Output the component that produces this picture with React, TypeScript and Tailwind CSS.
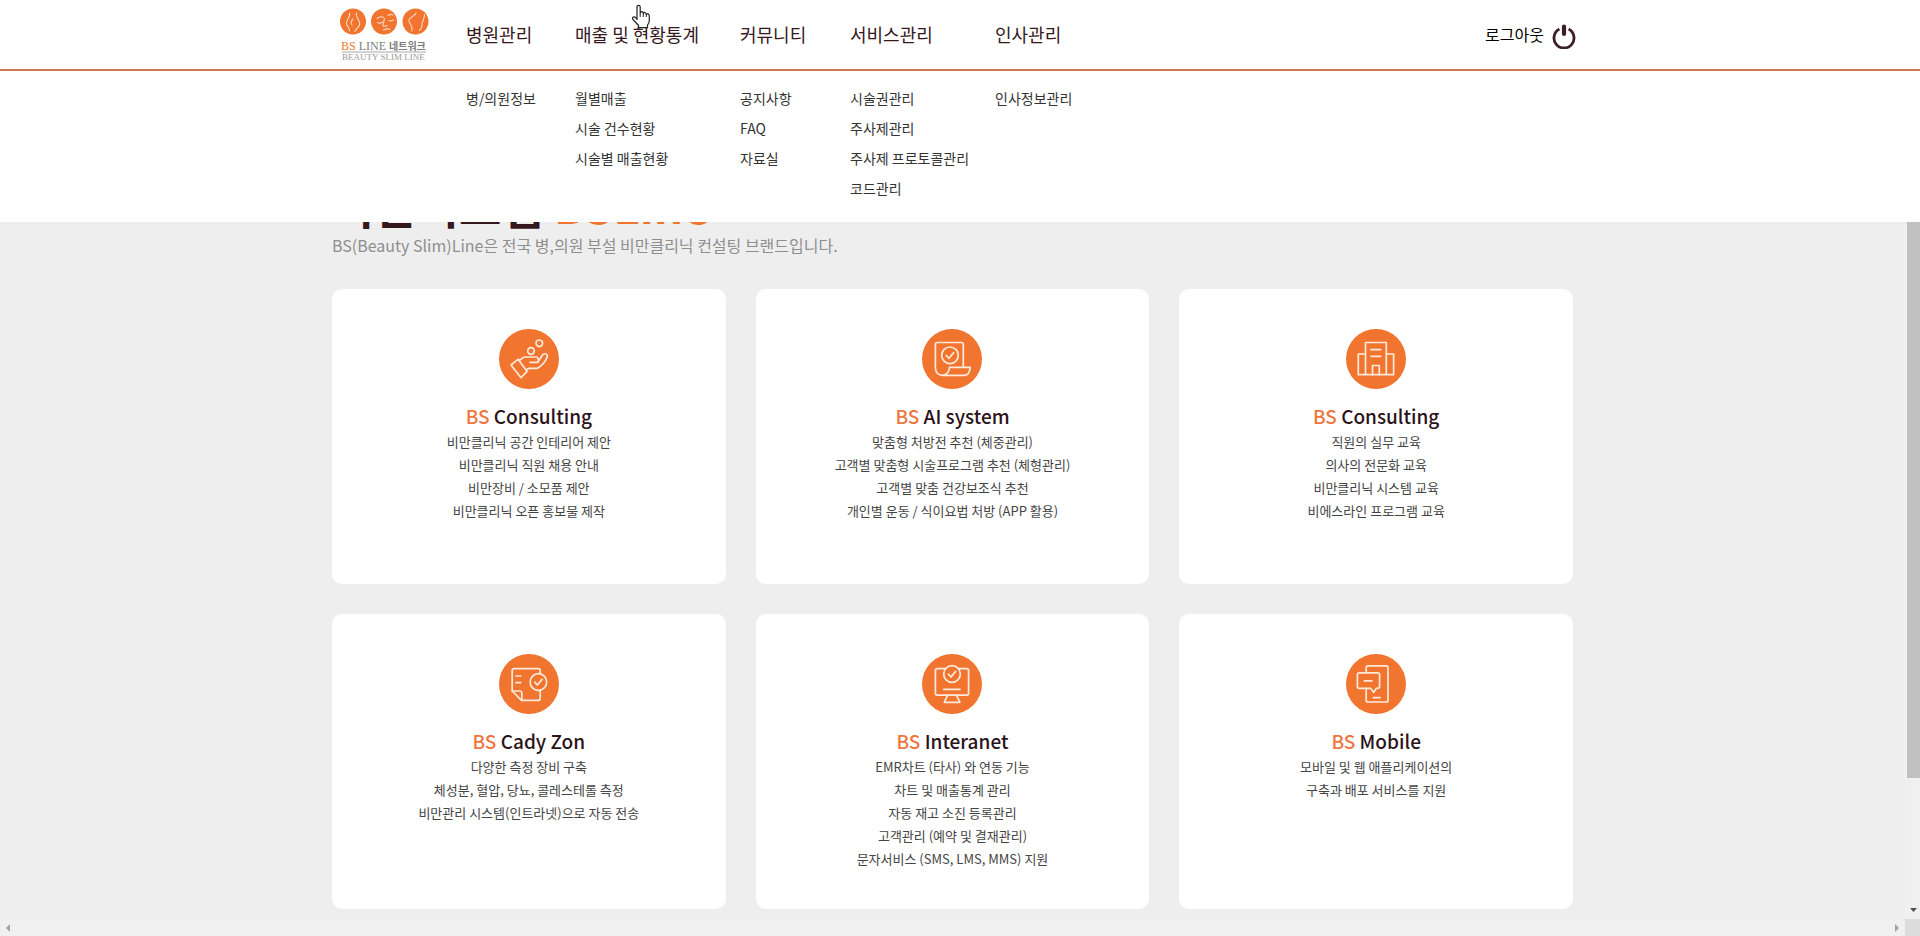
import type { ReactNode } from "react";

const menus = [
  { title: "병원관리", items: ["병/의원정보"] },
  { title: "매출 및 현황통계", items: ["월별매출", "시술 건수현황", "시술별 매출현황"] },
  { title: "커뮤니티", items: ["공지사항", "FAQ", "자료실"] },
  { title: "서비스관리", items: ["시술권관리", "주사제관리", "주사제 프로토콜관리", "코드관리"] },
  { title: "인사관리", items: ["인사정보관리"] },
];

const handIcon = (
  <>
    <circle cx="40.3" cy="14.3" r="3.3" />
    <circle cx="32" cy="22" r="3.3" />
    <path d="M12 36 19 30.3 28 42.3 22 48.7Z" />
    <path d="M19.5 31 C22 32 22.5 28 26 28 H37 C39.5 28 39.8 31 38.8 33.3 H31 M38.8 33.3 L43.3 26.2 C45.5 23.5 49 25 48.2 28 C46.5 32.5 42.5 37 38.5 39.3 H30 L27.2 41" />
  </>
);

const scrollIcon = (
  <>
    <path d="M41.3 38 V15.3 Q41.3 13.5 39.5 13.5 H15.2 Q13.4 13.5 13.4 15.3 V39 Q14 46.3 20.5 46.3 H42.5 Q47.5 46 48.3 38.3 H27.5 Q27 45.5 20.5 46.3" />
    <circle cx="28" cy="26.3" r="8.3" />
    <path d="M24.3 26.5 27 29.3 31.6 23.7" />
  </>
);

const buildingIcon = (
  <>
    <path d="M19.5 45.7 V13.5 H40.3 V45.7 M19.5 25 H12.3 V45.7 H47.6 V25 H40.3" />
    <path d="M25 20.7 H34.7 M25 27.3 H34.7 M26.5 45.7 V36.5 H33.3 V45.7" />
  </>
);

const reportIcon = (
  <>
    <path d="M41.2 19.7 V16.7 Q41.2 14.7 39.2 14.7 H15.2 Q13.2 14.7 13.2 16.7 V37 L22.5 46.3 H39.2 Q41.2 46.3 41.2 44.3 V36.3" />
    <path d="M13.2 37 H20.5 Q22.8 37 22.8 39.3 V46.3 M17 22 H21.7 M17 28.7 H21.7" />
    <circle cx="39.4" cy="28" r="8.3" />
    <path d="M35.7 28.2 38.4 31 43 25.4" />
  </>
);

const monitorIcon = (
  <>
    <path d="M23.3 14.7 H15.3 Q13.4 14.7 13.4 16.6 V39.2 Q13.4 41.1 15.3 41.1 H44.7 Q46.6 41.1 46.6 39.2 V16.6 Q46.6 14.7 44.7 14.7 H36.7" />
    <circle cx="30" cy="20" r="8.3" />
    <path d="M26.3 20.2 29 23 33.6 17.4 M21.7 35.3 H38 M25.7 41.1 22.3 48.3 H37.9 L34.4 41.1" />
  </>
);

const mobileIcon = (
  <>
    <path d="M20.2 18.7 V13.6 Q20.2 11.8 22 11.8 H40.2 Q42 11.8 42 13.6 V46.2 Q42 48 40.2 48 H22 Q20.2 48 20.2 46.2 V34.4" />
    <path d="M13.2 18.8 H31.7 Q33.6 18.8 33.6 20.7 V32.5 Q33.6 34.4 31.7 34.4 H30.2 L27.8 38.4 24.8 34.4 H13.2 Q11.4 34.4 11.4 32.5 V20.7 Q11.4 18.8 13.2 18.8Z" />
    <path d="M18.3 26.8 H26 M27.3 43.7 H34" />
  </>
);

const services: { name: string; icon: ReactNode; lines: string[] }[] = [
  {
    name: "Consulting",
    icon: handIcon,
    lines: ["비만클리닉 공간 인테리어 제안", "비만클리닉 직원 채용 안내", "비만장비 / 소모품 제안", "비만클리닉 오픈 홍보물 제작"],
  },
  {
    name: "AI system",
    icon: scrollIcon,
    lines: ["맞춤형 처방전 추천 (체중관리)", "고객별 맞춤형 시술프로그램 추천 (체형관리)", "고객별 맞춤 건강보조식 추천", "개인별 운동 / 식이요법 처방 (APP 활용)"],
  },
  {
    name: "Consulting",
    icon: buildingIcon,
    lines: ["직원의 실무 교육", "의사의 전문화 교육", "비만클리닉 시스템 교육", "비에스라인 프로그램 교육"],
  },
  {
    name: "Cady Zon",
    icon: reportIcon,
    lines: ["다양한 측정 장비 구축", "체성분, 혈압, 당뇨, 콜레스테롤 측정", "비만관리 시스템(인트라넷)으로 자동 전송"],
  },
  {
    name: "Interanet",
    icon: monitorIcon,
    lines: ["EMR차트 (타사) 와 연동 기능", "차트 및 매출통계 관리", "자동 재고 소진 등록관리", "고객관리 (예약 및 결재관리)", "문자서비스 (SMS, LMS, MMS) 지원"],
  },
  {
    name: "Mobile",
    icon: mobileIcon,
    lines: ["모바일 및 웹 애플리케이션의", "구축과 배포 서비스를 지원"],
  },
];

function Logo() {
  return (
    <svg viewBox="0 0 90 52" className="h-[52px] w-[90px]" role="img" aria-label="BS LINE 네트워크">
      <g fill="#f1742f">
        <circle cx="13" cy="13.5" r="13" />
        <circle cx="44" cy="13.5" r="13" />
        <circle cx="75.5" cy="13.5" r="13" />
      </g>
      <g fill="none" stroke="#fbd9c0" strokeWidth="1.1" strokeLinecap="round">
        <path d="M9.5 5 C11 9 6 11.5 6.500 15.500 C7 19 10 20 9.500 23 M13 11 C11 13 10.500 15 12 17" />
        <path d="M16.5 5 C15 9 21 13 19.500 17 C18.500 20 15.500 21 15 23.500" />
        <path d="M37 10.500 Q40.500 7.500 43.500 9.500 M48 7.500 Q51 5.500 53 7 M37.500 14.500 Q40 16 42.500 14" />
        <path d="M44.500 10.500 L43 17.500 Q44.500 19 47 17.500 M49 12.500 Q51 13.500 53.500 12 M43.500 22 Q47 20 50 21.500" />
        <path d="M76 5 C75 9 68 9 69 13.500 C70 16 73 18 72 23" />
        <path d="M84.500 6.500 C85 10 81.500 13 82 17 Q82 20 79.500 22.500" />
      </g>
      <text x="1" y="42" fontSize="12" className="font-['Liberation_Serif','Noto_Sans_CJK_KR',serif]" fill="#7d7d7d">
        <tspan fill="#f1742f">BS</tspan> LINE <tspan fontSize="10" fontWeight="700">네트워크</tspan>
      </text>
      <path d="M2 44 H86" stroke="#a8a8a8" strokeWidth="1" />
      <text x="2" y="51.500" fontSize="9" className="font-['Liberation_Serif',serif]" fill="#9a9a9a">
        BEAUTY SLIM LINE
      </text>
    </svg>
  );
}

const columns = "grid grid-cols-[109px_165px_110px_145px_1fr]";

function Header() {
  return (
    <header className="relative z-10 border-b-2 border-[#cc7a50] bg-white">
      <div className="mx-auto flex h-[69px] w-[1240px] items-start">
        <a href="#home" className="w-[126px] shrink-0 pt-2">
          <Logo />
        </a>
        <nav aria-label="주 메뉴" className={`${columns} flex-1 pt-[18px] text-lg leading-8 text-[#35171e]`}>
          {menus.map((menu) => (
            <a key={menu.title} href="#menu" className="whitespace-nowrap">
              {menu.title}
            </a>
          ))}
        </nav>
        <button type="button" className="flex items-center gap-2 pt-[18px] pr-1 text-base leading-8 text-black">
          로그아웃
          <svg viewBox="0 0 24 26" className="mt-1 h-[26px] w-6" fill="none" stroke="#3c2028" aria-hidden="true">
            <path d="M7.400 6.100 A10 10 0 1 0 16.600 6.100" strokeWidth="2.800" />
            <path d="M12 3.500 V11" strokeWidth="4.200" strokeLinecap="round" />
          </svg>
        </button>
      </div>
      <div className="absolute inset-x-0 top-full mt-[2px] bg-white pt-3 pb-[19px]">
        <div className={`${columns} mx-auto w-[1240px] pl-[126px] text-sm leading-[30px] text-[#333333]`}>
          {menus.map((menu) => (
            <ul key={menu.title}>
              {menu.items.map((item) => (
                <li key={item}>
                  <a href="#submenu" className="whitespace-nowrap">
                    {item}
                  </a>
                </li>
              ))}
            </ul>
          ))}
        </div>
      </div>
    </header>
  );
}

function ServiceCard({ name, icon, lines }: { name: string; icon: ReactNode; lines: string[] }) {
  return (
    <article className="min-h-[295px] rounded-[10px] bg-white pt-10 text-center">
      <svg viewBox="0 0 60 60" className="mx-auto size-[60px]" aria-hidden="true">
        <circle cx="30" cy="30" r="30" fill="#f1742f" />
        <g fill="none" stroke="#fdeadd" strokeWidth="1.7" strokeLinejoin="round" strokeLinecap="round">
          {icon}
        </g>
      </svg>
      <h2 className="mt-3 text-[19px] leading-[29px] font-medium text-[#2b1219]">
        <span className="text-[#ee7741]">BS</span> {name}
      </h2>
      {lines.map((line) => (
        <p key={line} className="text-[13px] leading-[23px] text-[#444444]">
          {line}
        </p>
      ))}
    </article>
  );
}

function PointerCursor() {
  return (
    <svg viewBox="0 0 20 25" className="absolute top-1 left-[631px] z-20 h-[25px] w-5" aria-hidden="true">
      <path
        d="M6 15.500 V3 Q6 1.300 7.600 1.300 Q9.200 1.300 9.200 3 V9 Q9.400 7.500 10.800 7.600 Q12.400 7.800 12.300 9.500 Q12.700 8.200 14 8.500 Q15.400 8.900 15.300 10.500 Q15.800 9.500 17 9.900 Q18.400 10.400 18.300 12 V16.500 Q18.200 19.500 16.500 21 V23.700 H7.500 V21.500 L2 15.500 Q.9 13.800 2.200 13 Q3.400 12.400 4.500 13.500Z"
        fill="#fff"
        stroke="#222"
        strokeWidth="1.200"
        strokeLinejoin="round"
      />
      <path d="M9.200 9 V13 M12.300 9.500 V13 M15.300 10.500 V13" stroke="#222" strokeWidth="1" />
    </svg>
  );
}

export default function App() {
  return (
    <div className="relative flex h-screen flex-col overflow-hidden bg-[#eeeeee] font-['Noto_Sans_CJK_KR',sans-serif]">
      <Header />
      <div className="flex min-h-0 flex-1">
        <main className="min-w-0 flex-1 overflow-hidden">
          <div className="mx-auto w-[1241px] pt-[107px]">
            <h1 className="text-[46px] leading-[52px] font-bold text-[#35171e]">
              비만시스템 <span className="text-[#f1742f]">BSLine</span>
            </h1>
            <p className="text-base leading-[30px] text-[#8e8e8e]">
              BS(Beauty Slim)Line은 전국 병,의원 부설 비만클리닉 컨설팅 브랜드입니다.
            </p>
            <section className="mt-[29px] grid grid-cols-3 gap-[30px]">
              {services.map((service, index) => (
                <ServiceCard key={index} {...service} />
              ))}
            </section>
          </div>
        </main>
        <div className="flex w-[15px] flex-col justify-between bg-[#f0f0f0]" aria-hidden="true">
          <div className="ml-[2px] h-5/6 bg-[#c1c1c1]" />
          <svg viewBox="0 0 7 4" className="mb-[7px] ml-[5px] h-1 w-[7px]">
            <path d="M0 0 H7 L3.500 4Z" fill="#505050" />
          </svg>
        </div>
      </div>
      <div className="flex h-[17px] items-center bg-[#f0f0f0]" aria-hidden="true">
        <svg viewBox="0 0 4 8" className="ml-1.5 h-2 w-1">
          <path d="M4 0 V8 L0 4Z" fill="#a3a3a3" />
        </svg>
        <svg viewBox="0 0 4 8" className="mr-1.5 ml-auto h-2 w-1">
          <path d="M0 0 V8 L4 4Z" fill="#a3a3a3" />
        </svg>
        <div className="h-full w-[15px] bg-[#dcdcdc]" />
      </div>
      <PointerCursor />
    </div>
  );
}
